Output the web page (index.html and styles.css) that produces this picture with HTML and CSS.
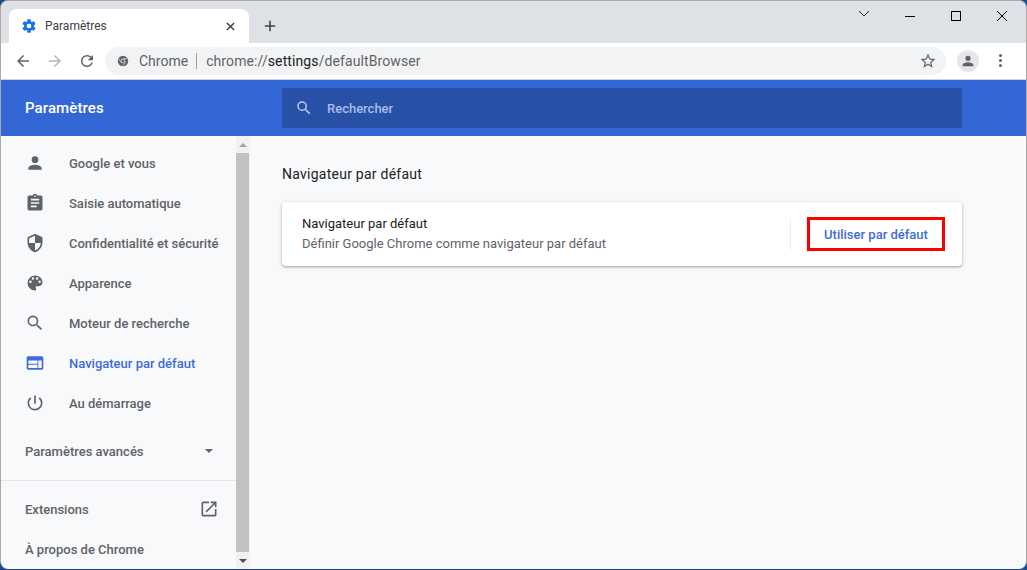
FILE: index.html
```html
<!DOCTYPE html>
<html lang="fr">
<head>
<meta charset="utf-8">
<title>Paramètres</title>
<link rel="stylesheet" href="styles.css">
</head>
<body>
<div class="window">
  <div class="tabstrip">
    <div class="tab">
      <svg class="tab-gear" viewBox="0 0 24 24"><path fill="#1a73e8" d="M19.43 12.98c.04-.32.07-.64.07-.98s-.03-.66-.07-.98l2.11-1.65c.19-.15.24-.42.12-.64l-2-3.46c-.12-.22-.39-.3-.61-.22l-2.49 1c-.52-.4-1.08-.73-1.69-.98l-.38-2.65A.49.49 0 0 0 14 2h-4c-.25 0-.46.18-.49.42l-.38 2.65c-.61.25-1.17.59-1.69.98l-2.49-1c-.23-.09-.49 0-.61.22l-2 3.46c-.13.22-.07.49.12.64l2.11 1.65c-.04.32-.07.65-.07.98s.03.66.07.98l-2.11 1.65c-.19.15-.24.42-.12.64l2 3.46c.12.22.39.3.61.22l2.49-1c.52.4 1.08.73 1.69.98l.38 2.65c.03.24.24.42.49.42h4c.25 0 .46-.18.49-.42l.38-2.65c.61-.25 1.17-.59 1.69-.98l2.49 1c.23.09.49 0 .61-.22l2-3.46c.12-.22.07-.49-.12-.64l-2.11-1.65zM12 15.5a3.5 3.5 0 1 1 0-7 3.5 3.5 0 0 1 0 7z"/></svg>
      <span class="tab-title">Paramètres</span>
      <svg class="tab-close" viewBox="0 0 10 10"><path d="M1 1l8 8M9 1l-8 8" stroke="#3c4043" stroke-width="1.6" fill="none"/></svg>
    </div>
    <svg class="new-tab" viewBox="0 0 14 14"><path d="M7 1v12M1 7h12" stroke="#3c4043" stroke-width="1.8" fill="none"/></svg>
    <div class="caption">
      <svg class="cap-btn" viewBox="0 0 46 30"><path d="M18 10l5 5 5-5" stroke="#222" fill="none"/></svg>
      <svg class="cap-btn" viewBox="0 0 46 30"><path d="M18 15.500h10" stroke="#000" fill="none"/></svg>
      <svg class="cap-btn" viewBox="0 0 46 30"><rect x="18.500" y="10.500" width="9" height="9" stroke="#000" fill="none"/></svg>
      <svg class="cap-btn" viewBox="0 0 46 30"><path d="M18 10l10 10M28 10l-10 10" stroke="#000" fill="none"/></svg>
    </div>
  </div>

  <div class="toolbar">
    <svg class="nav-icon" viewBox="0 0 24 24"><path fill="#5f6368" d="M20 11H7.830l5.590-5.590L12 4l-8 8 8 8 1.410-1.410L7.830 13H20z"/></svg>
    <svg class="nav-icon" viewBox="0 0 24 24"><path fill="#b5b7ba" d="M4 11h12.170l-5.590-5.590L12 4l8 8-8 8-1.410-1.410L16.170 13H4z"/></svg>
    <svg class="nav-icon" viewBox="0 0 24 24"><path fill="#5f6368" d="M17.650 6.350A7.960 7.960 0 0 0 12 4a8 8 0 1 0 7.730 10h-2.080A6 6 0 1 1 12 6c1.660 0 3.140.69 4.220 1.780L13 11h7V4l-2.350 2.350z"/></svg>
    <div class="omnibox">
      <svg class="chrome-icon" viewBox="0 0 16 16"><circle cx="8" cy="8" r="6" fill="#5f6368"/><circle cx="8" cy="8" r="2.700" fill="#f1f3f4"/><circle cx="8" cy="8" r="1.900" fill="#5f6368"/><path d="M8 5.300h5.200M5.700 9.500L3 5M10.400 9.300L7.500 14" stroke="#f1f3f4" stroke-width=".7"/></svg>
      <span class="chip">Chrome</span>
      <span class="omni-sep"></span>
      <span class="url">chrome://<b>settings</b>/defaultBrowser</span>
      <svg class="star" viewBox="0 0 24 24"><path fill="#5f6368" d="M22 9.240l-7.190-.62L12 2 9.190 8.630 2 9.240l5.460 4.730L5.820 21 12 17.270 18.180 21l-1.630-7.030L22 9.240zM12 15.400l-3.760 2.270 1-4.280-3.320-2.880 4.380-.38L12 6.100l1.710 4.040 4.380.38-3.320 2.880 1 4.280L12 15.400z"/></svg>
    </div>
    <div class="avatar"><svg viewBox="0 0 24 24"><path fill="#5f6368" d="M12 12a4 4 0 1 0 0-8 4 4 0 0 0 0 8zm0 2c-2.670 0-8 1.340-8 4v2h16v-2c0-2.660-5.330-4-8-4z"/></svg></div>
    <div class="kebab"><i></i><i></i><i></i></div>
  </div>

  <header class="app-header">
    <h1 class="app-title">Paramètres</h1>
    <div class="search">
      <svg class="search-icon" viewBox="0 0 24 24"><path fill="#c0cfef" d="M15.500 14h-.79l-.28-.27A6.470 6.470 0 0 0 16 9.500 6.500 6.500 0 1 0 9.500 16c1.610 0 3.090-.59 4.230-1.570l.27.28v.79l5 4.990L20.490 19l-4.990-5zm-6 0a4.500 4.500 0 1 1 0-9 4.500 4.500 0 0 1 0 9z"/></svg>
      <span class="search-text">Rechercher</span>
    </div>
  </header>

  <div class="main">
    <nav class="sidebar">
      <div class="menu">
        <a class="item"><svg viewBox="0 0 24 24"><path d="M12 12a4 4 0 1 0 0-8 4 4 0 0 0 0 8zm0 2c-2.670 0-8 1.340-8 4v2h16v-2c0-2.660-5.330-4-8-4z"/></svg>Google et vous</a>
        <a class="item"><svg viewBox="0 0 24 24"><path d="M19 3h-4.180A3 3 0 0 0 12 1a3 3 0 0 0-2.820 2H5a2 2 0 0 0-2 2v14a2 2 0 0 0 2 2h14a2 2 0 0 0 2-2V5a2 2 0 0 0-2-2zm-7 0a1 1 0 1 1 0 2 1 1 0 0 1 0-2zm2 14H7v-2h7v2zm3-4H7v-2h10v2zm0-4H7V7h10v2z"/></svg>Saisie automatique</a>
        <a class="item"><svg viewBox="0 0 24 24"><path d="M12 1L3 5v6c0 5.550 3.840 10.740 9 12 5.160-1.260 9-6.450 9-12V5l-9-4zm0 10.990h7c-.53 4.120-3.280 7.790-7 8.940V12H5V6.300l7-3.110v8.800z"/></svg>Confidentialité et sécurité</a>
        <a class="item"><svg viewBox="0 0 24 24"><path d="M12 3a9 9 0 0 0 0 18c.830 0 1.500-.670 1.500-1.500 0-.390-.150-.740-.390-1.010-.230-.260-.380-.610-.380-.990 0-.830.670-1.500 1.500-1.500H16c2.760 0 5-2.240 5-5 0-4.420-4.030-8-9-8zm-5.500 9a1.500 1.500 0 1 1 0-3 1.500 1.500 0 0 1 0 3zm3-4a1.500 1.500 0 1 1 0-3 1.500 1.500 0 0 1 0 3zm5 0a1.500 1.500 0 1 1 0-3 1.500 1.500 0 0 1 0 3zm3 4a1.500 1.500 0 1 1 0-3 1.500 1.500 0 0 1 0 3z"/></svg>Apparence</a>
        <a class="item"><svg viewBox="0 0 24 24"><path d="M15.500 14h-.79l-.28-.27A6.470 6.470 0 0 0 16 9.500 6.500 6.500 0 1 0 9.500 16c1.610 0 3.090-.59 4.230-1.570l.27.28v.79l5 4.990L20.490 19l-4.990-5zm-6 0a4.500 4.500 0 1 1 0-9 4.500 4.500 0 0 1 0 9z"/></svg>Moteur de recherche</a>
        <a class="item active"><svg viewBox="0 0 24 24"><path d="M20 4H4c-1.100 0-2 .9-2 2v12c0 1.100.9 2 2 2h16c1.100 0 2-.9 2-2V6c0-1.100-.9-2-2-2zm-5 14H4v-4h11v4zm0-5H4V9h11v4zm5 5h-4V9h4v9z"/></svg>Navigateur par défaut</a>
        <a class="item"><svg viewBox="0 0 24 24"><path d="M13 3h-2v10h2V3zm4.830 2.170l-1.420 1.420A6.920 6.920 0 0 1 19 12c0 3.870-3.130 7-7 7A6.995 6.995 0 0 1 7.580 6.580L6.170 5.170A8.932 8.932 0 0 0 3 12a9 9 0 0 0 18 0c0-2.740-1.230-5.190-3.170-6.830z"/></svg>Au démarrage</a>
      </div>
      <div class="advanced"><span>Paramètres avancés</span><i class="caret"></i></div>
      <div class="side-links">
        <a class="link"><span>Extensions</span><svg viewBox="0 0 24 24"><path fill="#5f6368" d="M19 19H5V5h7V3H5a2 2 0 0 0-2 2v14a2 2 0 0 0 2 2h14c1.100 0 2-.9 2-2v-7h-2v7zM14 3v2h3.590l-9.830 9.830 1.410 1.410L19 6.410V10h2V3h-7z"/></svg></a>
        <a class="link"><span>À propos de Chrome</span></a>
      </div>
    </nav>
    <div class="scrollbar">
      <div class="arrow up"></div>
      <div class="thumb"></div>
      <div class="arrow down"></div>
    </div>
    <section class="content">
      <h2 class="section-title">Navigateur par défaut</h2>
      <div class="card">
        <div class="card-text">
          <div class="card-title">Navigateur par défaut</div>
          <div class="card-sub">Définir Google Chrome comme navigateur par défaut</div>
        </div>
        <div class="card-sep"></div>
        <button class="use-btn">Utiliser par défaut</button>
      </div>
    </section>
  </div>
</div>
</body>
</html>
```
FILE: styles.css
```css
* { box-sizing: border-box; }
html, body { margin: 0; height: 100%; overflow: hidden; }
body { background: #1d4a8f; font-family: Roboto, "Liberation Sans", sans-serif; }

.window {
  width: 1027px; height: 569px;
  display: flex; flex-direction: column;
  border: 1px solid #a9a9a9; border-bottom: 0;
  border-radius: 8px 8px 8px 8px;
  overflow: hidden;
  background: #f8f9fa;
}

.tabstrip {
  height: 42px; flex: none;
  background: #dee1e6;
  display: flex; align-items: flex-end;
  padding-left: 8px;
}
.tab {
  width: 240px; height: 34px;
  background: #fff;
  border-radius: 8px 8px 0 0;
  display: flex; align-items: center;
  padding: 0 14px 0 12px;
}
.tab-gear { width: 16px; height: 16px; flex: none; }
.tab-title { margin-left: 8px; flex: 1; font-size: 12px; color: #3c4043; }
.tab-close { width: 9px; height: 9px; flex: none; }
.new-tab { width: 12px; height: 12px; margin: 0 0 11px 15px; flex: none; }
.caption { margin-left: auto; align-self: flex-start; display: flex; padding-right: 1px; }
.cap-btn { width: 46px; height: 30px; display: block; }

.toolbar {
  height: 37px; flex: none;
  background: #fff;
  border-bottom: 1px solid #d0d2d5;
  display: flex; align-items: center;
  padding: 0 0 1px 7px;
}
.nav-icon { width: 18px; height: 18px; margin-left: 6px; margin-right: 8px; flex: none; }
.omnibox {
  width: 841px; height: 28px; margin-left: 1px;
  background: #f1f3f4; border-radius: 14px;
  display: flex; align-items: center;
  padding: 0 9px 0 11px;
}
.chrome-icon { width: 14px; height: 14px; flex: none; }
.chip { margin-left: 9px; font-size: 14px; color: #5f6368; }
.omni-sep { width: 1px; height: 16px; background: #9aa0a6; margin: 0 9px 0 8px; }
.url { flex: 1; font-size: 14px; color: #5f6368; letter-spacing: .1px; }
.url b { font-weight: 400; color: #202124; }
.star { width: 18px; height: 18px; flex: none; }
.avatar {
  width: 22px; height: 22px; border-radius: 50%;
  background: #e4e6ea; margin-left: 11px;
  display: flex; align-items: center; justify-content: center;
}
.avatar svg { width: 16px; height: 16px; }
.kebab { display: flex; flex-direction: column; gap: 2px; margin-left: 20px; }
.kebab i { width: 3px; height: 3px; border-radius: 50%; background: #5f6368; display: block; }

.app-header {
  height: 56px; flex: none;
  background: #3367d6;
  display: flex; align-items: center;
}
.app-title { width: 281px; margin: 0; padding-left: 24px; font-size: 15px; font-weight: 500; color: #fff; letter-spacing: .1px; }
.search {
  width: 680px; height: 40px;
  background: #2850a7; border-radius: 2px;
  display: flex; align-items: center;
  padding-left: 13px;
}
.search-icon { width: 18px; height: 18px; flex: none; }
.search-text { margin-left: 14px; font-size: 13px; font-weight: 500; color: #a9bde8; }

.main { flex: 1; min-height: 0; display: flex; }
.sidebar { width: 235px; flex: none; display: flex; flex-direction: column; padding-top: 7px; }
.item {
  height: 40px; display: flex; align-items: center;
  padding-left: 23px;
  font-size: 13px; font-weight: 500; color: #5f6368;
}
.item svg { width: 20px; height: 20px; margin: 0 24px 0 1px; fill: #5f6368; flex: none; }
.item.active { color: #3f6bd8; }
.item.active svg { fill: #3f6bd8; }
.menu { flex: none; }
.advanced {
  height: 40px; margin-top: 8px;
  display: flex; align-items: center; justify-content: space-between;
  padding: 0 23px 0 24px;
  font-size: 13px; font-weight: 500; color: #5f6368;
}
.caret { width: 0; height: 0; border: 4.500px solid transparent; border-top: 4.500px solid #5f6368; border-bottom: 0; }
.side-links { margin-top: 9px; border-top: 1px solid #e3e5e8; padding-top: 8px; }
.link {
  height: 40px; display: flex; align-items: center; justify-content: space-between;
  padding: 0 17px 0 24px;
  font-size: 13px; font-weight: 500; color: #5f6368;
}
.link svg { width: 20px; height: 20px; }

.scrollbar { width: 14px; flex: none; background: #f1f1f1; display: flex; flex-direction: column; }
.arrow { height: 17px; flex: none; display: flex; align-items: center; justify-content: center; }
.arrow::before { content: ""; border: 4px solid transparent; }
.arrow.up::before { border-top: 0; border-bottom: 4px solid #a3a3a3; }
.arrow.down::before { border-bottom: 0; border-top: 4px solid #505050; }
.thumb { flex: 1; background: #c1c1c1; margin-right: 1px; }

.content { flex: 1; min-width: 0; padding-left: 32px; }
.section-title { margin: 28px 0 18px; font-size: 14px; line-height: 20px; font-weight: 400; color: #202124; letter-spacing: .25px; }
.card {
  width: 680px; height: 64px;
  background: #fff; border-radius: 4px;
  box-shadow: 0 1px 2px rgba(60,64,67,.3), 0 1px 3px 1px rgba(60,64,67,.15);
  display: flex; align-items: center;
  padding: 0 17px 0 20px;
}
.card-text { flex: 1; }
.card-title { font-size: 13px; line-height: 20px; color: #202124; }
.card-sub { font-size: 13px; line-height: 20px; color: #5f6368; }
.card-sep { width: 1px; height: 32px; background: #eceef0; margin-right: 16px; }
.use-btn {
  width: 138px; height: 34px;
  background: #fff; border: 3px solid #f00;
  font: 500 13px Roboto, "Liberation Sans", sans-serif; color: #3f6bd8;
  padding: 0;
}
```
